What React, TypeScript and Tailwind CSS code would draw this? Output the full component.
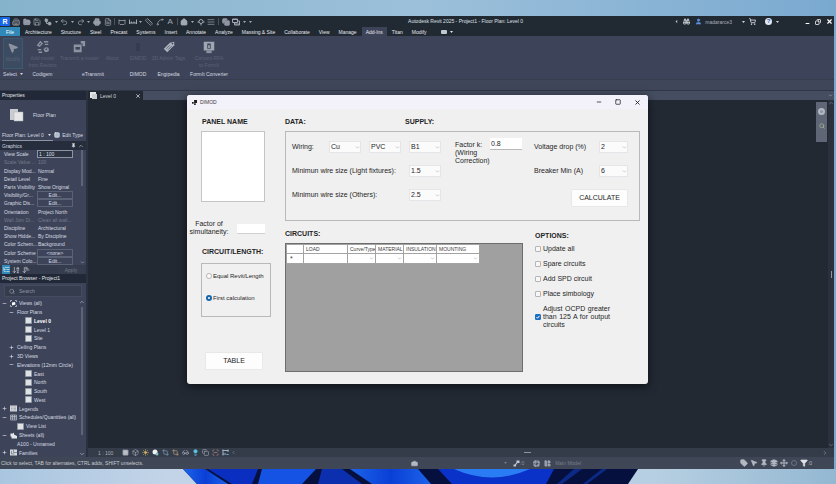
import type { ReactNode } from 'react';
import {
  AlignJustify,
  ArrowDownAZ,
  ArrowDownNarrowWide,
  Binoculars,
  Box,
  Building2,
  Camera,
  ChevronDown,
  ChevronLeft,
  ChevronRight,
  ChevronUp,
  Copy,
  Crop,
  FileText,
  Filter,
  FolderOpen,
  Glasses,
  Grid2x2,
  House,
  Layers,
  Lightbulb,
  LayoutPanelLeft,
  ListTree,
  Minus,
  MousePointer2,
  Move,
  PencilRuler,
  Pin,
  Plus,
  Printer,
  Redo2,
  Ruler,
  Save,
  ScanLine,
  Search,
  ShoppingCart,
  Spline,
  Square,
  Sun,
  Table2,
  Tag,
  Undo2,
  User,
  Workflow,
  X,
} from 'lucide-react';

const MENU_TABS = [
  'Architecture',
  'Structure',
  'Steel',
  'Precast',
  'Systems',
  'Insert',
  'Annotate',
  'Analyze',
  'Massing & Site',
  'Collaborate',
  'View',
  'Manage',
  'Add-Ins',
  'Titan',
  'Modify',
];

type Property = {
  name: string;
  value: string;
  kind?: 'input' | 'button' | 'disabled';
};

const PROPERTIES: Property[] = [
  { name: 'View Scale', value: '1 : 100', kind: 'input' },
  { name: 'Scale Value ...', value: '100', kind: 'disabled' },
  { name: 'Display Mod...', value: 'Normal' },
  { name: 'Detail Level', value: 'Fine' },
  { name: 'Parts Visibility', value: 'Show Original' },
  { name: 'Visibility/Gr...', value: 'Edit...', kind: 'button' },
  { name: 'Graphic Dis...', value: 'Edit...', kind: 'button' },
  { name: 'Orientation', value: 'Project North' },
  { name: 'Wall Join Di...', value: 'Clean all wall...', kind: 'disabled' },
  { name: 'Discipline', value: 'Architectural' },
  { name: 'Show Hidde...', value: 'By Discipline' },
  { name: 'Color Schem...', value: 'Background' },
  { name: 'Color Scheme', value: '<none>', kind: 'button' },
  { name: 'System Colo...', value: 'Edit...', kind: 'button' },
];

type TreeItem = {
  label: string;
  level: 0 | 1 | 2;
  state?: 'open' | 'closed';
  icon?: 'views' | 'sheet' | 'legend' | 'schedule' | 'sheets' | 'families';
  bold?: boolean;
};

const TREE: TreeItem[] = [
  { label: 'Views (all)', level: 0, state: 'open', icon: 'views' },
  { label: 'Floor Plans', level: 1, state: 'open' },
  { label: 'Level 0', level: 2, icon: 'sheet', bold: true },
  { label: 'Level 1', level: 2, icon: 'sheet' },
  { label: 'Site', level: 2, icon: 'sheet' },
  { label: 'Ceiling Plans', level: 1, state: 'closed' },
  { label: '3D Views', level: 1, state: 'closed' },
  { label: 'Elevations (12mm Circle)', level: 1, state: 'open' },
  { label: 'East', level: 2, icon: 'sheet' },
  { label: 'North', level: 2, icon: 'sheet' },
  { label: 'South', level: 2, icon: 'sheet' },
  { label: 'West', level: 2, icon: 'sheet' },
  { label: 'Legends', level: 0, state: 'closed', icon: 'legend' },
  { label: 'Schedules/Quantities (all)', level: 0, state: 'open', icon: 'schedule' },
  { label: 'View List', level: 1, icon: 'sheet' },
  { label: 'Sheets (all)', level: 0, state: 'open', icon: 'sheets' },
  { label: 'A100 - Unnamed', level: 1 },
  { label: 'Families', level: 0, state: 'closed', icon: 'families' },
];

const INDENT = { 0: 'pl-[2px]', 1: 'pl-[9px]', 2: 'pl-[17px]' };

function Caret() {
  return (
    <svg viewBox="0 0 6 4" className="h-[2px] w-[3px] shrink-0 fill-current">
      <path d="M0 0h6L3 4z" />
    </svg>
  );
}

function ToolButton({ label, children }: { label: string; children: ReactNode }) {
  return (
    <button type="button" aria-label={label} className="flex h-2 w-2 shrink-0 items-center justify-center">
      {children}
    </button>
  );
}

function QuickAccess() {
  const icon = 'h-2 w-2';
  return (
    <div className="flex w-[252px] items-center text-[#a3a9b4]">
      <button
        type="button"
        aria-label="Revit"
        className="h-[9px] w-[10px] rounded-[1px] bg-[#1668e8] text-[7px] leading-[9px] font-bold text-white"
      >
        R
      </button>
      <div className="ml-[2px] flex flex-1 items-center justify-between">
        <ToolButton label="Home"><Building2 className={icon} /></ToolButton>
        <ToolButton label="Open"><FolderOpen className="h-2 w-2 fill-[#8d94a2]" /></ToolButton>
        <ToolButton label="Save"><Save className={icon} /></ToolButton>
        <ToolButton label="Sync"><Workflow className="h-2 w-2 fill-current" /></ToolButton>
        <Caret />
        <ToolButton label="Undo"><Undo2 className={icon} /></ToolButton>
        <Caret />
        <ToolButton label="Redo"><Redo2 className={icon} /></ToolButton>
        <Caret />
        <ToolButton label="Print"><Printer className="h-2 w-2 fill-[#8d94a2]" /></ToolButton>
        <ToolButton label="Export"><FileText className={icon} /></ToolButton>
        <span className="h-[7px] w-px bg-[#4a5260]" />
        <ToolButton label="Measure">
          <svg viewBox="0 0 16 16" className={icon} fill="none" stroke="currentColor" strokeWidth="1.5">
            <path d="M2 3v10M14 3v10M2 5h12M4 13h8" />
          </svg>
        </ToolButton>
        <ToolButton label="Dimension">
          <svg viewBox="0 0 16 16" className={icon} fill="none" stroke="currentColor" strokeWidth="2">
            <path d="M1 3v9M15 3v9M1 10h14M5 10V7M10 10V7" />
          </svg>
        </ToolButton>
        <Caret />
        <ToolButton label="Align"><Ruler className={icon} /></ToolButton>
        <ToolButton label="Spline"><Spline className={icon} /></ToolButton>
        <button type="button" className="w-2 text-[8px] leading-[9px]">A</button>
        <span className="h-[7px] w-px bg-[#4a5260]" />
        <ToolButton label="3D view"><House className="h-2 w-2 fill-current" /></ToolButton>
        <Caret />
        <ToolButton label="Section">
          <svg viewBox="0 0 16 16" className={icon} fill="none" stroke="currentColor" strokeWidth="2">
            <circle cx="8" cy="7" r="4" />
            <path d="M1 8h3M12 8h3M8 11v4" />
          </svg>
        </ToolButton>
        <ToolButton label="Thin lines"><AlignJustify className={icon} /></ToolButton>
        <span className="h-[7px] w-px bg-[#4a5260]" />
        <ToolButton label="Close views"><Copy className="h-2 w-2 fill-[#8d94a2]" /></ToolButton>
        <ToolButton label="Switch windows">
          <svg viewBox="0 0 16 16" className={icon} fill="none" stroke="currentColor" strokeWidth="2">
            <path d="M1 2h10v7H1zM5 9v5h10V6h-4" />
            <path d="M1 3h10M5 12h10" />
          </svg>
        </ToolButton>
        <Caret />
        <Caret />
      </div>
    </div>
  );
}

function TitleBar() {
  return (
    <header className="grid h-[11px] shrink-0 grid-cols-[407fr_auto_310fr] items-center bg-[#212933]">
      <QuickAccess />
      <h1 className="pb-[2px] text-[#dfe2e6]">Autodesk Revit 2025 - Project1 - Floor Plan: Level 0</h1>
      <div className="flex items-center justify-end gap-1 text-[#d5d9df]">
        <ChevronLeft className="h-[5px] w-[5px] fill-current" />
        <Binoculars className="h-[7px] w-[7px]" strokeWidth={3} />
        <span className="ml-px flex items-center gap-[3px] text-[#a9afb9]">
          <User className="h-[7px] w-[7px] fill-[#5c93df] text-[#5c93df]" />
          madararce3
        </span>
        <span className="ml-[6px]"><Caret /></span>
        <ShoppingCart className="h-[7px] w-[7px]" strokeWidth={3} />
        <button
          type="button"
          aria-label="Help"
          className="ml-[5px] h-[7px] w-[7px] rounded-full bg-[#e3e9f2] text-[6px] leading-[7px] font-bold text-[#2d5fa8]"
        >
          ?
        </button>
        <Caret />
        <div className="ml-[22px] flex items-center gap-[5px] pr-px text-white">
          <button type="button" aria-label="Minimize"><Minus className="mt-1 h-[5px] w-[5px]" strokeWidth={5} /></button>
          <button type="button" aria-label="Restore"><Copy className="h-[6px] w-[6px] -scale-x-100" strokeWidth={3} /></button>
          <button type="button" aria-label="Close"><X className="h-[7px] w-[7px]" strokeWidth={4} /></button>
        </div>
      </div>
    </header>
  );
}

function MenuTabs() {
  return (
    <nav className="flex h-[9px] shrink-0 items-center gap-px bg-[#212933] text-[#e6e8ec]">
      <button type="button" className="h-[9px] w-5 bg-[#3189b9] text-white">File</button>
      {MENU_TABS.map((tab) => (
        <button
          key={tab}
          type="button"
          className={tab === 'Add-Ins' ? 'h-[9px] bg-[#3d4459] px-1' : 'h-[9px] px-1'}
        >
          {tab}
        </button>
      ))}
      <span className="ml-[9px] flex items-center gap-[3px]">
        <span className="h-[4px] w-[6px] rounded-[1px] bg-[#c3c8d0]" />
        <Caret />
      </span>
    </nav>
  );
}

function RibbonButton({ icon, children }: { icon?: ReactNode; children: ReactNode }) {
  return (
    <button type="button" className="flex flex-1 flex-col items-center text-[#5b6275]">
      <span className="flex h-[17px] items-center justify-center text-[#8d93a1]">{icon}</span>
      <span className="leading-[7px] whitespace-nowrap">{children}</span>
    </button>
  );
}

function RibbonPanel({ title, className, children }: { title: ReactNode; className: string; children: ReactNode }) {
  return (
    <section className={`flex flex-col items-center ${className}`}>
      <div className="flex w-full flex-1">{children}</div>
      <h2 className="flex h-[10px] items-center text-[#d6dae0]">{title}</h2>
    </section>
  );
}

function Ribbon() {
  return (
    <div className="flex h-[44px] shrink-0 border-b border-[#363d4d] bg-[#3d4459] pt-[2px]">
      <RibbonPanel
        className="w-[25px] pl-px"
        title={<span className="flex items-center gap-[3px]">Select <Caret /></span>}
      >
        <div className="mx-[2px] flex h-[31px] flex-1 border border-[#3d5a70] bg-[#3b4c62]">
          <RibbonButton icon={<MousePointer2 className="h-[14px] w-[12px] fill-current" />}>Modify</RibbonButton>
        </div>
      </RibbonPanel>
      <RibbonPanel className="w-[35px]" title="Codigem">
        <RibbonButton
          icon={
            <svg viewBox="0 0 16 16" className="h-[14px] w-[14px]" fill="none" stroke="currentColor" strokeWidth="1.5">
              <path d="M2 6l3-4 2 2-3 3zM9 2h5M10 5h4M2 11h4M3 14h4M9 10l2 3 3-2" />
              <circle cx="12" cy="11" r="2" />
            </svg>
          }
        >
          Add model
          <br />
          from Revizto
        </RibbonButton>
      </RibbonPanel>
      <RibbonPanel className="w-[66px]" title="eTransmit">
        <RibbonButton
          icon={
            <svg viewBox="0 0 16 16" className="h-[14px] w-[14px]" fill="currentColor">
              <path d="M2 5h9v9H2zM10 1h5v6h-3V4h-2z" />
              <path d="M4 8h5v3H4z" fill="#3d4459" />
            </svg>
          }
        >
          Transmit a model
        </RibbonButton>
        <RibbonButton>About</RibbonButton>
      </RibbonPanel>
      <RibbonPanel className="w-[24px]" title="DIMOD">
        <RibbonButton icon={<span className="h-2 w-1 bg-[#353c4d]" />}>DIMOD</RibbonButton>
      </RibbonPanel>
      <RibbonPanel className="w-[37px]" title="Engipedia">
        <RibbonButton
          icon={
            <svg viewBox="0 0 16 16" className="h-[14px] w-[14px]">
              <path d="M2 10L9 3l5-1 0 4-8 8z" fill="#adb2bc" />
              <path d="M5 10l4-4M7 11l4-4" stroke="#5b6275" />
              <circle cx="12" cy="4" r="1" fill="#3d4459" />
            </svg>
          }
        >
          3D Admin Tags
        </RibbonButton>
      </RibbonPanel>
      <RibbonPanel className="w-[44px]" title="FormIt Converter">
        <RibbonButton
          icon={
            <svg viewBox="0 0 16 16" className="h-[14px] w-[14px]">
              <path d="M2 2h12v10H2z" fill="#a0a6b2" />
              <path d="M5 12h6v3H5z" fill="#8d93a1" />
              <path d="M6 4h4v6H6z" fill="#3d4459" />
              <path d="M7 6h2v3H7z" fill="#a0a6b2" />
            </svg>
          }
        >
          Convert RFA
          <br />
          to FormIt
        </RibbonButton>
      </RibbonPanel>
    </div>
  );
}

function PropertyValue({ property }: { property: Property }) {
  const { name, value, kind } = property;
  if (kind === 'input') {
    return (
      <input
        aria-label={name}
        defaultValue={value}
        className="h-[8px] w-[36px] border border-[#8f95a2] bg-[#2d3444] pl-px text-[5px] leading-[6px] text-[#dfe2e6]"
      />
    );
  }
  if (kind === 'button') {
    return (
      <button type="button" aria-label={name} className="h-[8px] w-[36px] border border-[#5a6275] leading-[6px]">
        {value}
      </button>
    );
  }
  return <span className="pl-px whitespace-nowrap">{value}</span>;
}

function PropertiesPanel() {
  return (
    <section className="flex shrink-0 flex-col">
      <h2 className="h-[9px] bg-[#212938] pl-[2px] leading-[8px] text-[#e3e6ea]">Properties</h2>
      <div className="flex h-[29px] items-center gap-[9px] pl-[10px]">
        <svg viewBox="0 0 14 14" className="h-[14px] w-[14px]">
          <path d="M0 1h8v11H0z" fill="#c9ccd0" />
          <path d="M4 4h9v9H4z" fill="#e6e7e6" stroke="#a8adb5" strokeWidth="0.5" />
        </svg>
        Floor Plan
      </div>
      <div className="flex h-[12px] items-center justify-between pr-[3px] pl-[2px]">
        <button type="button" className="flex h-[11px] items-center gap-1 border-b border-[#8f95a2] pr-[2px]">
          Floor Plan: Level 0 <Caret />
        </button>
        <button type="button" className="flex items-center gap-[2px]">
          <Grid2x2 className="h-[6px] w-[6px] fill-[#a9bccb] text-white" />
          Edit Type
        </button>
      </div>
      <div className="flex h-[9px] items-center bg-[#262d3c] pl-[2px]">
        <h3 className="flex-1">Graphics</h3>
        <Pin className="h-[5px] w-[5px] fill-current" />
        <ChevronUp className="mx-[2px] h-[6px] w-[6px]" />
      </div>
      <div className="flex h-[115px]">
        <dl className="grid flex-1 auto-rows-fr pl-1">
          {PROPERTIES.map((property) => (
            <div
              key={property.name}
              className={
                property.kind === 'disabled' ? 'flex items-center text-[#737a89]' : 'flex items-center'
              }
            >
              <dt className="w-[33px] whitespace-nowrap">{property.name}</dt>
              <dd className="flex items-center">
                <PropertyValue property={property} />
              </dd>
            </div>
          ))}
        </dl>
        <div className="flex w-[8px] flex-col items-center justify-between">
          <span className="h-[36px] w-[2px] bg-[#5d6577]" />
          <ChevronDown className="h-[5px] w-[5px]" />
        </div>
      </div>
      <div className="flex h-[9px] items-center gap-[2px] bg-[#343b4c] pl-[2px] text-[#c4c9d1]">
        <button type="button" aria-label="Group" className="flex h-[9px] w-[8px] items-center justify-center bg-[#3189b9] text-white">
          <ListTree className="h-[7px] w-[7px]" />
        </button>
        <button type="button" aria-label="Sort"><ArrowDownAZ className="h-2 w-2" /></button>
        <button type="button" aria-label="Order"><ArrowDownNarrowWide className="h-2 w-2" /></button>
        <button type="button" className="mr-[2px] ml-auto w-[26px] bg-[#363d4e] text-[#737a89]">Apply</button>
      </div>
    </section>
  );
}

function TreeIcon({ name }: { name: NonNullable<TreeItem['icon']> }) {
  return (
    <svg viewBox="0 0 14 14" className="h-[7px] w-[7px] shrink-0">
      {name === 'sheet' && <path d="M1 1h12v12H1z" fill="#dfe2e4" stroke="#959ba6" strokeWidth="1.5" />}
      {name === 'views' && (
        <>
          <path d="M1 4V1h3M10 1h3v3M13 10v3h-3M4 13H1v-3" fill="none" stroke="#c4c9d1" strokeWidth="1.5" />
          <path d="M4 5l6-1 1 5-7 2z" fill="#fff" />
        </>
      )}
      {name === 'legend' && (
        <>
          <path d="M0 1h14v12H0z" fill="#d5d8dc" />
          <path d="M2 4h3M2 7h3M2 10h3M7 4h5M7 7h5M7 10h5" stroke="#787f8d" />
        </>
      )}
      {name === 'schedule' && (
        <path d="M1 2h12v10H1zM1 5h12M1 8h12M5 2v10M9 2v10" fill="none" stroke="#b4b9c3" strokeWidth="1.5" />
      )}
      {name === 'sheets' && <path d="M1 3h5l2-2v4l6 3v5H3V9H1z" fill="#e3e6ea" />}
      {name === 'families' && (
        <>
          <path d="M0 1h14v12H0z" fill="#d5d8dc" />
          <path d="M7 1v6h7M3 4v6h6" fill="none" stroke="#6c7483" strokeWidth="1.5" />
        </>
      )}
    </svg>
  );
}

function ProjectBrowser() {
  return (
    <section className="flex min-h-0 flex-1 flex-col">
      <h2 className="h-[9px] shrink-0 bg-[#212938] pl-[2px] leading-[8px] text-[#e3e6ea]">
        Project Browser - Project1
      </h2>
      <div className="px-1 py-[2px]">
        <label className="flex h-[12px] items-center gap-1 border border-[#454c5f] bg-[#353c4d] pl-1">
          <Search className="h-[7px] w-[7px] text-[#aab0bb]" />
          <input
            type="search"
            aria-label="Search"
            placeholder="Search"
            className="w-full bg-transparent text-[5px] placeholder:text-[#8d94a2]"
          />
        </label>
      </div>
      <div className="flex min-h-0 flex-1">
        <ul className="grid flex-1 auto-rows-fr">
          {TREE.map((item) => (
            <li key={item.label} className={`flex items-center whitespace-nowrap ${INDENT[item.level]}`}>
              <span className="flex w-[8px] shrink-0">
                {item.state === 'open' && <Minus className="h-[5px] w-[5px]" strokeWidth={3} />}
                {item.state === 'closed' && <Plus className="h-[5px] w-[5px]" strokeWidth={3} />}
              </span>
              <span className={item.bold ? 'flex items-center gap-[2px] font-bold text-white' : 'flex items-center gap-[2px]'}>
                {item.icon && <TreeIcon name={item.icon} />}
                {item.label}
              </span>
            </li>
          ))}
        </ul>
        <div className="flex w-[8px] flex-col items-center">
          <ChevronUp className="mb-[2px] h-[6px] w-[6px]" />
          <span className="w-[2px] flex-1 bg-[#5d6577]" />
          <ChevronDown className="mt-[16px] h-[6px] w-[6px]" />
        </div>
      </div>
    </section>
  );
}

function DrawingArea() {
  const icon = 'h-[7px] w-[7px]';
  return (
    <main className="flex min-w-0 flex-1 flex-col bg-[#222933]">
      <div className="flex h-[9px] shrink-0 items-center bg-[#454d60]">
        <div className="flex h-[9px] w-[55px] items-center bg-[#222933] pr-[2px] pl-[2px] text-[#d0d4da]">
          <svg viewBox="0 0 7 7" className="mr-[3px] h-[7px] w-[7px]">
            <path d="M0 0h6v6H0z" fill="#e3e5e6" />
            <path d="M2 2h5v5H2z" fill="#c9ccd0" />
          </svg>
          <span className="flex-1">Level 0</span>
          <button type="button" aria-label="Close view"><X className="h-[6px] w-[6px]" strokeWidth={3} /></button>
        </div>
        <ChevronDown className="mr-px ml-auto h-[5px] w-[5px]" />
      </div>
      <div className="flex flex-1">
        <div className="flex flex-1 items-start justify-end pt-[2px] pr-px">
          <div className="flex h-[40px] w-[11px] flex-col items-center gap-[8px] bg-[#5f6776] pt-[6px]">
            <button type="button" aria-label="Steering wheel" className="h-[7px] w-[7px] rounded-full border-2 border-[#b3b9c2] bg-[#8f96a2]" />
            <button type="button" aria-label="Zoom region"><Search className="h-[6px] w-[6px] text-[#a5ad96]" strokeWidth={3} /></button>
          </div>
        </div>
        <div className="flex w-[6px] flex-col items-center justify-between bg-[#2a313d] text-[#8d94a2]">
          <ChevronUp className="h-[6px] w-[6px]" />
          <span className="h-[7px] w-px bg-[#8d94a2]" />
          <ChevronDown className="h-[6px] w-[6px]" />
        </div>
      </div>
      <div className="flex h-[9px] shrink-0 items-center bg-[#343b49] text-[#aab0bb]">
        <span className="w-[33px] pl-[10px]">1 : 100</span>
        <div className="flex items-center gap-[2px]">
          <ToolButton label="Detail level"><Square className="h-[7px] w-[7px] fill-[#b9bdc4] text-[#8d94a2]" /></ToolButton>
          <ToolButton label="Visual style"><Box className={icon} /></ToolButton>
          <ToolButton label="Sun path"><Sun className="h-[7px] w-[7px] fill-[#d9b065] text-[#d9b065]" /></ToolButton>
          <ToolButton label="Shadows">
            <svg viewBox="0 0 14 14" className={icon}>
              <circle cx="6" cy="6" r="5" fill="#f0f2f3" />
              <circle cx="10" cy="10" r="3" fill="#7cc4c4" />
            </svg>
          </ToolButton>
          <ToolButton label="Crop view"><Crop className="h-[7px] w-[7px] text-[#86a9c4]" /></ToolButton>
          <ToolButton label="Show crop"><Crop className="h-[7px] w-[7px] text-[#c9ac7c]" /></ToolButton>
          <ToolButton label="Temporary hide"><Glasses className={icon} /></ToolButton>
          <ToolButton label="Reveal hidden"><Lightbulb className="h-[7px] w-[7px] fill-[#5cc5e4] text-[#5cc5e4]" /></ToolButton>
          <ToolButton label="View properties"><Copy className={icon} /></ToolButton>
          <ToolButton label="Analytical model"><ScanLine className="h-[7px] w-[7px] text-[#cb9a90]" /></ToolButton>
          <ToolButton label="Constraints">
            <svg viewBox="0 0 14 14" className={icon} fill="none" strokeWidth="2">
              <path d="M1 3h12M1 10h7M2 1v12M12 1v5" stroke="#9fb0c0" />
              <path d="M9 11h4" stroke="#5cc5e4" />
            </svg>
          </ToolButton>
          <ChevronLeft className="h-[5px] w-[5px]" />
        </div>
        <div className="flex flex-1 justify-center">
          <span className="mr-[4px] h-px w-[7px] bg-[#8d94a2]" />
        </div>
        <ChevronRight className="mr-[6px] h-[6px] w-[6px]" />
      </div>
    </main>
  );
}

function StatusBar() {
  const icon = 'h-2 w-2';
  return (
    <footer className="flex h-[12px] shrink-0 items-center bg-[#3f4655] text-[#b4b9c3]">
      <p className="w-[411px] pl-px text-[#c9cdd4]">
        Click to select, TAB for alternates, CTRL adds, SHIFT unselects.
      </p>
      <Camera className="h-[7px] w-[7px] fill-current" />
      <span className="ml-[86px] text-[#747b89]"><Caret /></span>
      <span className="ml-[6px] flex items-center text-[#8d94a2]">
        <svg viewBox="0 0 14 14" className="h-[7px] w-[7px] fill-[#c4c9d1]">
          <path d="M7 1h6v5H9l-3 4v3H1V9h3l3-4z" />
        </svg>
        :0
      </span>
      <span className="ml-[9px] flex items-center gap-1">
        <Table2 className="h-[7px] w-[7px] fill-[#8d94a2]" />
        <LayoutPanelLeft className="h-[7px] w-[7px] fill-[#8d94a2]" />
        <span className="text-[#767d8b]">Main Model</span>
      </span>
      <div className="mr-[22px] ml-auto flex items-center gap-[2px]">
        <ToolButton label="Select links"><Tag className="h-2 w-2 fill-current" /></ToolButton>
        <ToolButton label="Select underlay"><MousePointer2 className="h-2 w-2 fill-current" /></ToolButton>
        <ToolButton label="Select pinned"><Pin className="h-2 w-2 fill-current" /></ToolButton>
        <ToolButton label="Select by face"><Layers className="h-2 w-2 fill-current" /></ToolButton>
        <ToolButton label="Drag elements"><Move className={icon} strokeWidth={3} /></ToolButton>
        <ToolButton label="Background processes">
          <span className="h-[6px] w-[6px] rounded-full border border-[#6b7280]" />
        </ToolButton>
        <span className="flex items-center">
          <Filter className="h-2 w-2 fill-current text-[#dfe2e6]" />:0
        </span>
      </div>
    </footer>
  );
}

type DropDownProps = { label: string; value: string; className?: string };

function DropDown({ label, value, className = 'w-[32px]' }: DropDownProps) {
  return (
    <span className={`relative flex h-[12px] shrink-0 ${className}`}>
      <select
        aria-label={label}
        defaultValue={value}
        className="w-full appearance-none border border-[#e6e4e8] bg-[#fcfbfc] pl-px text-[7px] leading-[10px]"
      >
        <option>{value}</option>
      </select>
      <ChevronDown className="pointer-events-none absolute top-[4px] right-px h-[5px] w-[5px] text-[#8a8a8a]" />
    </span>
  );
}

function CheckOption({ label, checked = false }: { label: string; checked?: boolean }) {
  return (
    <label className="flex items-center gap-[2px]">
      <span className="relative flex h-[6px] w-[6px] shrink-0">
        <input
          type="checkbox"
          defaultChecked={checked}
          className="peer h-[6px] w-[6px] appearance-none rounded-[1px] border border-[#b5b5b5] bg-[#f7f7f7] checked:border-[#1b6fc2] checked:bg-[#1b6fc2]"
        />
        <svg
          viewBox="0 0 6 6"
          className="pointer-events-none absolute inset-0 hidden h-[6px] w-[6px] fill-none stroke-white peer-checked:block"
        >
          <path d="M1.5 3l1 1.2L4.6 1.8" />
        </svg>
      </span>
      <span className="w-[67px] text-justify">{label}</span>
    </label>
  );
}

function RadioOption({ label, checked = false }: { label: string; checked?: boolean }) {
  return (
    <label className="flex items-center gap-px text-[6px] leading-[8px] whitespace-nowrap">
      <input
        type="radio"
        name="length"
        defaultChecked={checked}
        className="h-[6px] w-[6px] shrink-0 appearance-none rounded-full border border-[#b5b5b5] bg-white checked:border-2 checked:border-[#1567ad]"
      />
      {label}
    </label>
  );
}

function CircuitsTable() {
  const head = 'h-[9px] overflow-hidden border border-[#a3a3a3] pl-[2px] text-left font-normal whitespace-nowrap';
  const cell = 'h-[10px] border border-[#a3a3a3]';
  const arrow = <ChevronDown className="mr-px ml-auto h-[5px] w-[5px] text-[#8a8a8a]" />;
  return (
    <div className="mt-1 h-[129px] w-[238px] border border-[#6d6d6d] bg-[#a0a0a0]">
      <table className="w-[193px] table-fixed border-collapse bg-white text-[5px] leading-[7px] text-[#3a3a3a]">
        <colgroup>
          <col className="w-[17px]" />
          <col className="w-[44px]" />
          <col className="w-[28px]" />
          <col className="w-[28px]" />
          <col className="w-[33px]" />
          <col className="w-[43px]" />
        </colgroup>
        <thead>
          <tr>
            <th className={head} aria-label="Row" />
            <th className={head}>LOAD</th>
            <th className={head}>Curve/Type</th>
            <th className={head}>MATERIAL</th>
            <th className={head}>INSULATION</th>
            <th className={head}>MOUNTING</th>
          </tr>
        </thead>
        <tbody>
          <tr>
            <td className={`${cell} pl-[3px] text-[7px]`}>*</td>
            <td className={cell} />
            <td className={cell}>{arrow}</td>
            <td className={cell}>{arrow}</td>
            <td className={cell}>{arrow}</td>
            <td className={cell}>{arrow}</td>
          </tr>
        </tbody>
      </table>
    </div>
  );
}

function DimodDialog() {
  const heading = 'text-[7px] leading-[10px] font-bold whitespace-nowrap';
  const button = 'h-[18px] rounded-[1px] border border-[#e8e8e8] bg-[#fdfdfd] text-center';
  return (
    <div
      role="dialog"
      aria-label="DIMOD"
      className="absolute top-[95px] left-[187px] w-[461px] rounded-[3px] bg-[#f0f0f0] text-[7px] leading-[8px] text-[#1f1f1f] shadow-[0_2px_10px_rgba(0,0,0,0.6)]"
    >
      <div className="flex h-[14px] items-center rounded-t-[3px] bg-[#f3f2fa] pr-[7px] pl-[5px] text-[5px]">
        <svg viewBox="0 0 12 12" className="mr-[3px] h-[5px] w-[5px]">
          <path d="M5 0h7v7H5zM0 5h4v4H0zM5 8h4v4H5z" fill="#1f1f1f" />
        </svg>
        <span className="flex-1 text-[#3a3a3a]">DIMOD</span>
        <div className="flex gap-[13px]">
          <button type="button" aria-label="Minimize"><Minus className="h-[6px] w-[6px]" strokeWidth={3} /></button>
          <button type="button" aria-label="Maximize"><Square className="h-[6px] w-[6px]" strokeWidth={3} /></button>
          <button type="button" aria-label="Close"><X className="h-[7px] w-[7px]" strokeWidth={3} /></button>
        </div>
      </div>

      <div className="flex pt-2 pb-3">
        <div className="w-[98px]">
          <h2 className={`${heading} pl-[15px]`}>PANEL NAME</h2>
          <div className="mt-1 ml-[14px] h-[71px] w-[64px] border border-[#c4c4c4] bg-white" />
          <label className="mt-[18px] flex h-4 items-center gap-2 pl-[2px]">
            <span className="w-[40px] text-center">
              Factor of
              <br />
              simultaneity:
            </span>
            <input type="text" className="mt-[2px] h-[10px] w-[28px] border-b border-[#d0d0d0] bg-white" />
          </label>
          <h2 className={`${heading} mt-[11px] pl-[15px]`}>CIRCUIT/LENGTH:</h2>
          <div className="mt-[6px] ml-[14px] flex h-[54px] w-[70px] flex-col gap-[14px] border border-[#b9b9b9] pt-[8px] pl-1">
            <RadioOption label="Equal Revit/Length" />
            <RadioOption label="First calculation" checked />
          </div>
          <button type="button" className={`${button} mt-[35px] ml-[18px] w-[58px]`}>TABLE</button>
        </div>

        <div className="flex-1 pr-2">
          <div className="flex">
            <h2 className={`${heading} w-[120px]`}>DATA:</h2>
            <h2 className={heading}>SUPPLY:</h2>
          </div>
          <div className="mt-1 flex h-[90px] border border-[#b9b9b9] pt-[9px]">
            <div className="flex w-[155px] flex-col gap-[12px] pl-[6px]">
              <div className="flex items-center justify-between">
                <span className="w-[29px]">Wiring:</span>
                <DropDown label="Wiring material" value="Cu" />
                <DropDown label="Wiring insulation" value="PVC" />
                <DropDown label="Wiring mounting" value="B1" />
              </div>
              <div className="flex items-center justify-between whitespace-nowrap">
                Minimun wire size (Light fixtures):
                <DropDown label="Minimun wire size (Light fixtures)" value="1.5" />
              </div>
              <div className="flex items-center justify-between whitespace-nowrap">
                Minimun wire size (Others):
                <DropDown label="Minimun wire size (Others)" value="2.5" />
              </div>
            </div>
            <label className="ml-[14px] flex w-[79px] items-start">
              <span className="w-[35px] whitespace-nowrap">
                Factor k:
                <br />
                (Wiring
                <br />
                Correction)
              </span>
              <input
                type="text"
                defaultValue="0.8"
                className="-mt-[3px] h-[12px] w-[32px] border-b border-[#b9b9b9] bg-white pl-px text-[7px]"
              />
            </label>
            <div className="flex w-[94px] flex-col gap-[12px]">
              <div className="flex items-center justify-between whitespace-nowrap">
                Voltage drop (%)
                <DropDown label="Voltage drop (%)" value="2" className="w-[29px]" />
              </div>
              <div className="flex items-center justify-between whitespace-nowrap">
                Breaker Min (A)
                <DropDown label="Breaker Min (A)" value="6" className="w-[29px]" />
              </div>
              <button type="button" className={`${button} ml-auto w-[57px]`}>CALCULATE</button>
            </div>
          </div>

          <div className="mt-2 flex gap-[12px]">
            <div>
              <h2 className={heading}>CIRCUITS:</h2>
              <CircuitsTable />
            </div>
            <div className="flex flex-col pt-[2px]">
              <h2 className={heading}>OPTIONS:</h2>
              <div className="mt-[4px] flex flex-col gap-[7px]">
                <CheckOption label="Update all" />
                <CheckOption label="Spare circuits" />
                <CheckOption label="Add SPD circuit" />
                <CheckOption label="Place simbology" />
                <CheckOption label="Adjust OCPD greater than 125 A for output circuits" checked />
              </div>
            </div>
          </div>
        </div>
      </div>
    </div>
  );
}

function Wallpaper() {
  return (
    <svg viewBox="0 0 836 15" preserveAspectRatio="none" className="block h-[15px] w-full shrink-0">
      <defs>
        <linearGradient id="sky">
          <stop offset="0" stopColor="#a9c6e0" />
          <stop offset="0.2" stopColor="#c3d4e8" />
          <stop offset="0.78" stopColor="#b7cfe2" />
          <stop offset="1" stopColor="#94b8d2" />
        </linearGradient>
        <linearGradient id="petal">
          <stop offset="0" stopColor="#1c64ea" />
          <stop offset="0.5" stopColor="#0a3fd6" />
          <stop offset="1" stopColor="#1c64ea" />
        </linearGradient>
      </defs>
      <path d="M0 0h836v15H0z" fill="url(#sky)" />
      <path d="M183 0h455l-10 15H197z" fill="#06103f" />
      <path d="M183 0h22l23 15h-31z" fill="url(#petal)" />
      <path d="M208 0h50l-6 15h-20z" fill="#0a2fc0" />
      <path d="M262 0h54l-14 15h-44z" fill="#1453e4" />
      <path d="M322 0h20l20 15h-44z" fill="#0b2fae" />
      <path d="M350 0h68l13 15h-59z" fill="url(#petal)" />
      <path d="M438 0h116l-8 15H452z" fill="#0a32c8" />
      <path d="M454 0h76q-38 17-76 0z" fill="#2a7cf5" />
      <path d="M574 0h8l-20 15h-5zM602 0h5l-20 15h-4z" fill="#0b2a86" />
    </svg>
  );
}

export default function App() {
  return (
    <div className="relative flex min-h-screen flex-col overflow-hidden bg-linear-to-r from-[#86b3cc] via-[#9cc0da] to-[#7aa9d0] font-['Liberation_Sans',Arial,sans-serif] text-[5px] leading-[8px]">
      <div className="mr-[2px] flex flex-1 flex-col pt-4">
        <TitleBar />
        <MenuTabs />
        <Ribbon />
        <div className="h-[11px] shrink-0 border-b border-[#2f3646] bg-[#3f465a]" />
        <div className="flex flex-1 text-[#d8dbe1]">
          <aside className="flex w-[88px] shrink-0 flex-col border-r-2 border-[#2a3140] bg-[#3d4459]">
            <PropertiesPanel />
            <ProjectBrowser />
          </aside>
          <DrawingArea />
        </div>
        <StatusBar />
      </div>
      <Wallpaper />
      <DimodDialog />
    </div>
  );
}
